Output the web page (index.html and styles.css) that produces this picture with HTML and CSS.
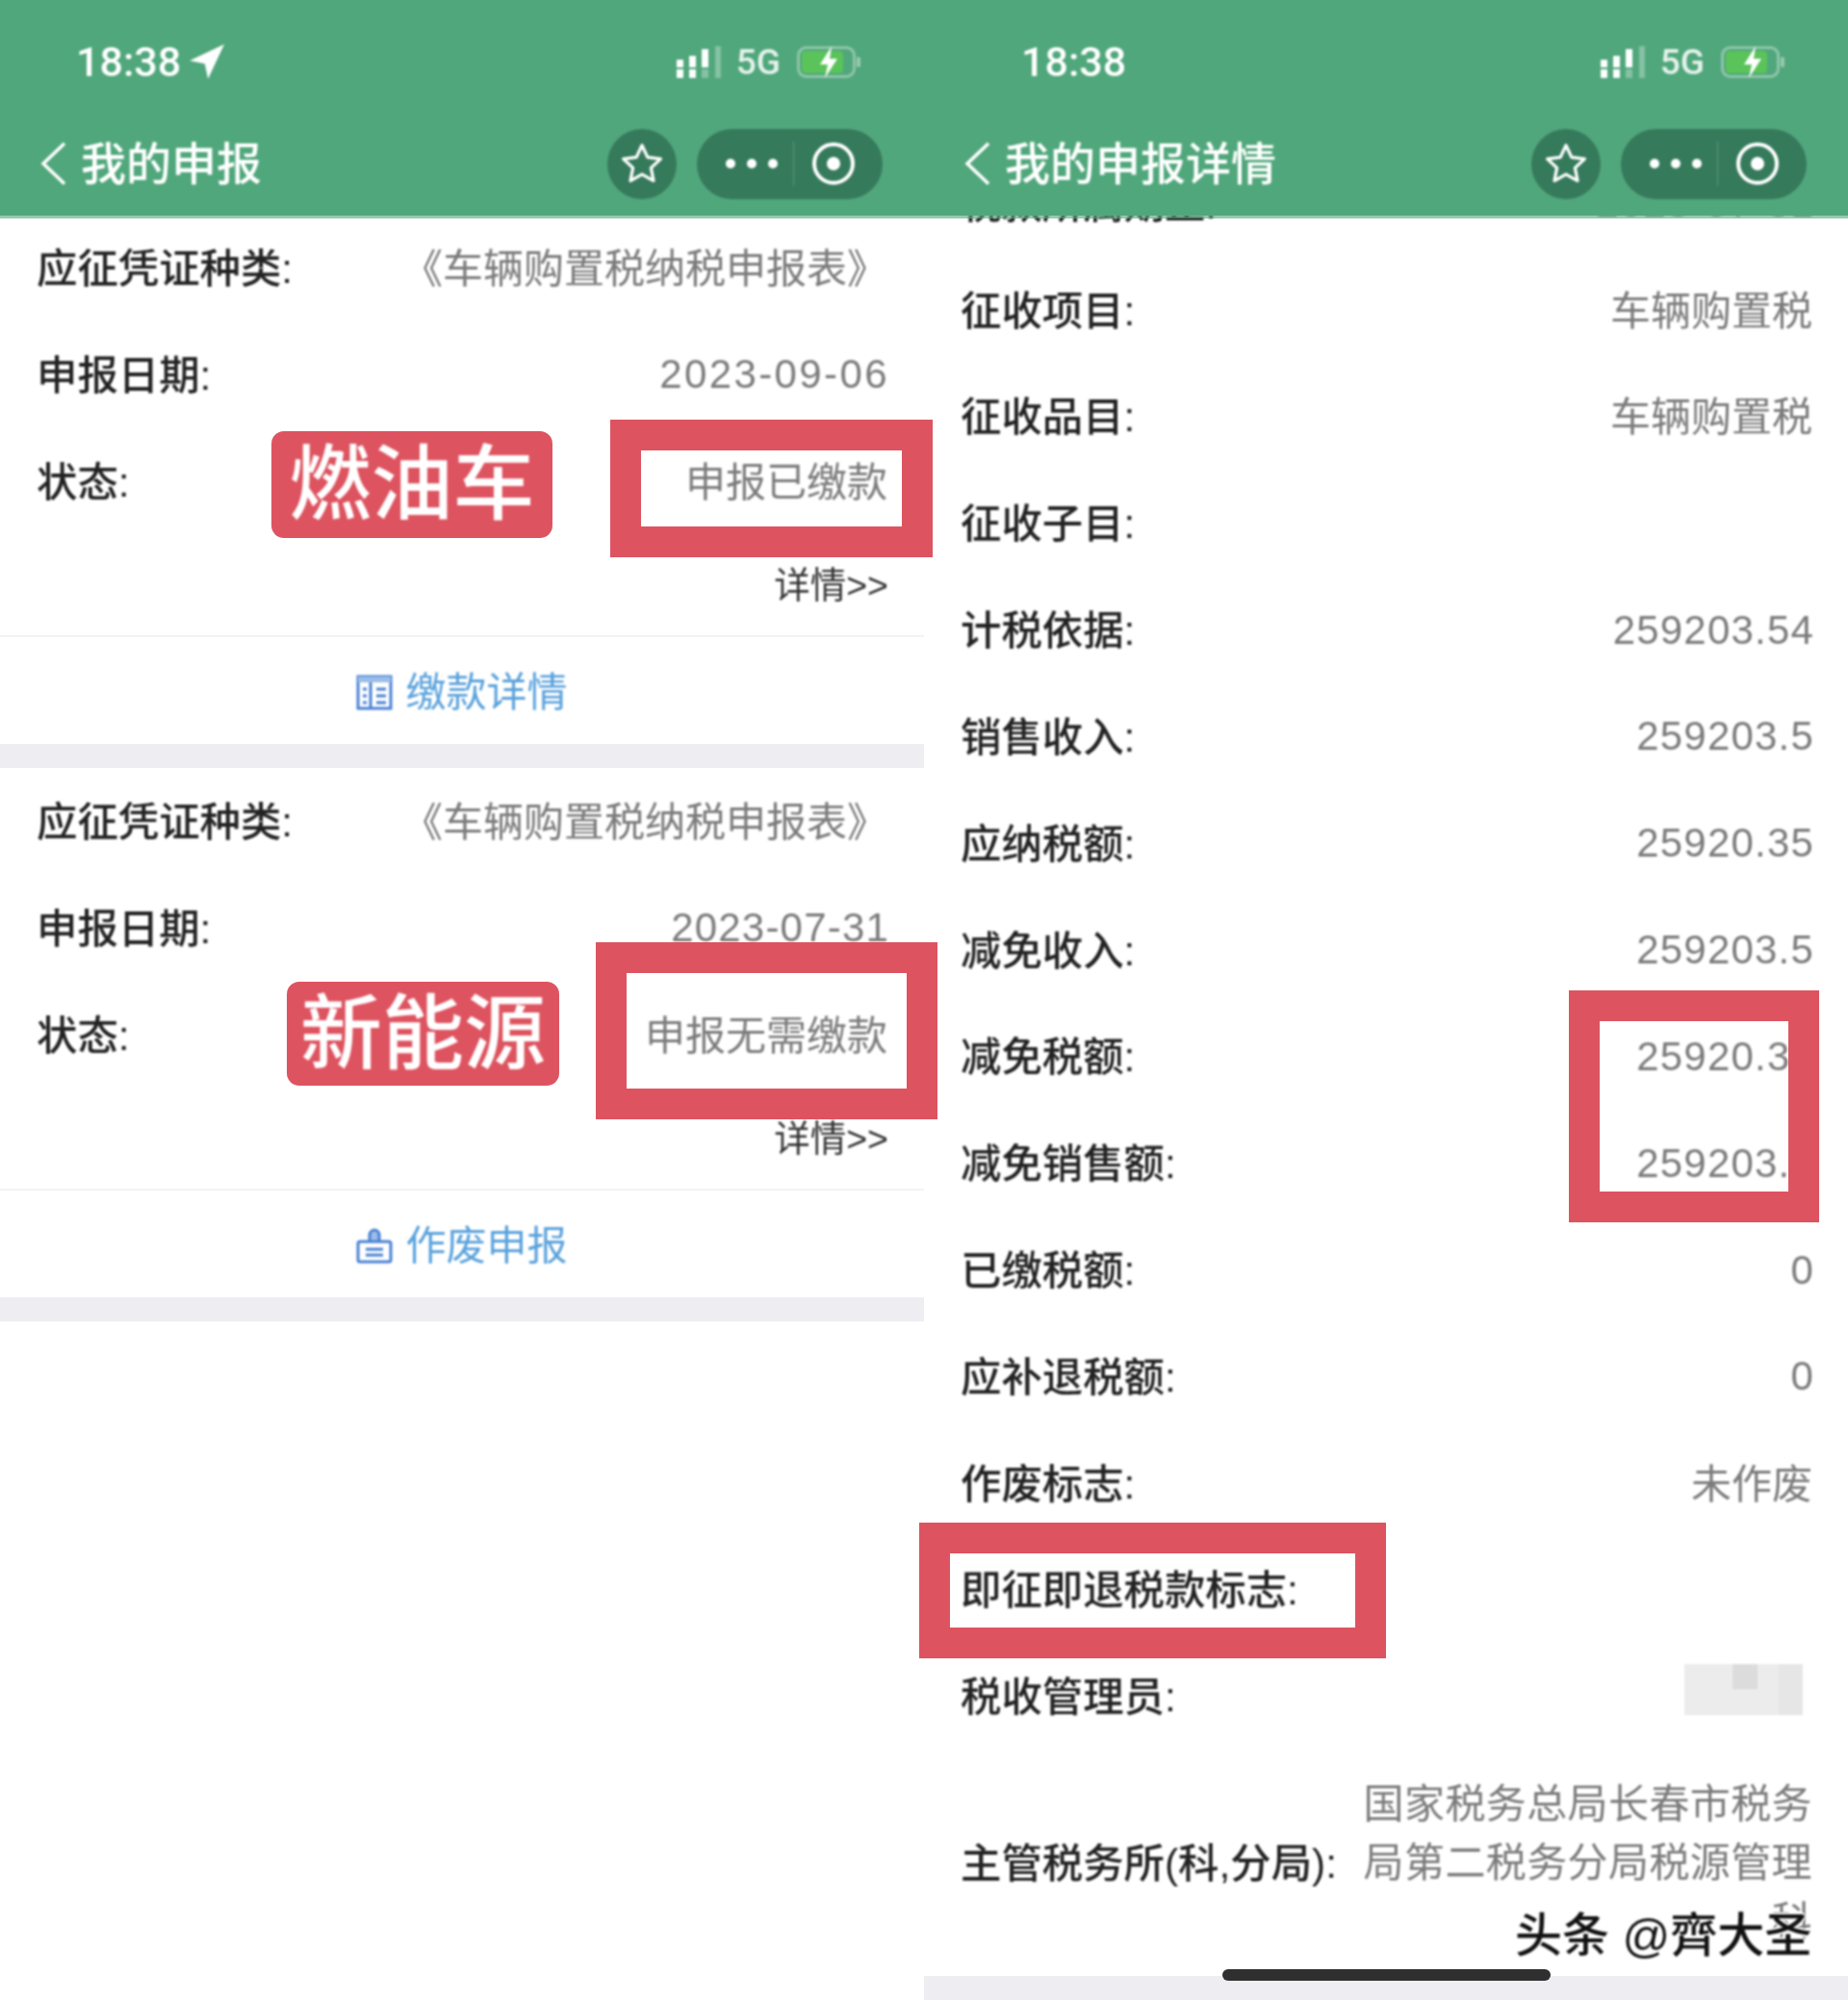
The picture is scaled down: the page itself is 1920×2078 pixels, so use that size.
FILE: index.html
```html
<!DOCTYPE html>
<html lang="zh-CN">
<head>
<meta charset="utf-8">
<title>我的申报</title>
<link rel="stylesheet" href="styles.css">
</head>
<body>
<div class="app">
  <section class="panel">
    <header class="topbar">
      <div class="status status-left">
        <span class="time">18:38</span>
        <svg class="loc" viewBox="0 0 32 32"><path d="M32 0 0 15l14 3 3 14z" fill="#fff"/></svg>
        <div class="status-right">
          <svg class="signal" viewBox="0 0 48 33"><g fill="#fff"><rect x="0" y="14" width="7" height="8"/><rect x="0" y="24" width="7" height="9"/><rect x="13" y="10" width="7" height="12"/><rect x="13" y="24" width="7" height="9"/><rect x="26" y="3" width="7" height="19"/></g><g fill="#fff" opacity=".3"><rect x="26" y="24" width="7" height="9"/><rect x="40" y="0" width="6" height="33"/></g></svg>
          <span class="net">5G</span>
          <svg class="battery" viewBox="0 0 67 33"><rect x="1.5" y="1.5" width="58" height="30" rx="8" fill="none" stroke="#fff" stroke-opacity=".35" stroke-width="3"/><rect x="5" y="5" width="43" height="23" rx="4" fill="#5ac35a"/><rect x="62" y="11" width="4" height="11" rx="2" fill="#fff" fill-opacity=".4"/><path d="M36 0 24 19h8l-3 14 13-20h-8z" fill="#fff"/></svg>
        </div>
      </div>
      <div class="nav">
        <svg class="back" viewBox="0 0 27 46"><path d="M25 2 3 23l22 21" fill="none" stroke="#fff" stroke-width="3.5"/></svg>
        <span class="title">我的申报</span>
        <div class="capsules">
          <div class="fav"><svg class="star" viewBox="0 0 44 44"><path d="m22 3 5.8 12.4 13.6 1.7-10 9.3 2.6 13.4L22 33.2 10 39.8l2.6-13.4-10-9.3 13.6-1.7z" fill="none" stroke="#fff" stroke-width="3.2" stroke-linejoin="round"/></svg></div>
          <div class="pill">
            <span class="dots"><i></i><i></i><i></i></span>
            <span class="pill-sep"></span>
            <span class="target"><i></i></span>
          </div>
        </div>
      </div>
    </header>
    <div class="edge"></div>
    <div class="feed">
      <article class="card">
        <div class="row"><span class="label">应征凭证种类:</span><span class="value">《车辆购置税纳税申报表》</span></div>
        <div class="row"><span class="label">申报日期:</span><span class="value num date">2023-09-06</span></div>
        <div class="row"><span class="label">状态:</span><span class="value">申报已缴款</span></div>
        <div class="more">详情&gt;&gt;</div>
        <div class="action">
          <svg class="act-icon" viewBox="0 0 38 38"><rect x="2" y="3" width="34" height="33" fill="none" stroke="#4a82d4" stroke-width="3"/><rect x="2" y="3" width="34" height="6" fill="#9cbde8"/><path d="M15 9v27M21 16h10M21 23h10M21 30h10M7 16h4M7 23h4M7 30h4" stroke="#4a82d4" stroke-width="3"/></svg>
          <span class="act-text">缴款详情</span>
        </div>
      </article>
      <div class="gap"></div>
      <article class="card">
        <div class="row"><span class="label">应征凭证种类:</span><span class="value">《车辆购置税纳税申报表》</span></div>
        <div class="row"><span class="label">申报日期:</span><span class="value num">2023-07-31</span></div>
        <div class="row"><span class="label">状态:</span><span class="value">申报无需缴款</span></div>
        <div class="more">详情&gt;&gt;</div>
        <div class="action">
          <svg class="act-icon" viewBox="0 0 38 38"><path d="M14 15V8a5 5 0 0 1 10 0v7" fill="#9cbde8" stroke="#4a82d4" stroke-width="3"/><rect x="2" y="15" width="34" height="21" rx="2" fill="none" stroke="#4a82d4" stroke-width="3"/><path d="M10 23h18M10 29h18" stroke="#4a82d4" stroke-width="3"/></svg>
          <span class="act-text">作废申报</span>
        </div>
      </article>
      <div class="gap"></div>
    </div>
    <div class="badge badge-fuel"><span>燃油车</span></div>
    <div class="badge badge-ev"><span>新能源</span></div>
    <div class="mark mark-a"></div>
    <div class="mark mark-b"></div>
  </section>

  <section class="panel">
    <header class="topbar">
      <div class="status status-plain">
        <span class="time">18:38</span>
        <div class="status-right">
          <svg class="signal" viewBox="0 0 48 33"><g fill="#fff"><rect x="0" y="14" width="7" height="8"/><rect x="0" y="24" width="7" height="9"/><rect x="13" y="10" width="7" height="12"/><rect x="13" y="24" width="7" height="9"/><rect x="26" y="3" width="7" height="19"/></g><g fill="#fff" opacity=".3"><rect x="26" y="24" width="7" height="9"/><rect x="40" y="0" width="6" height="33"/></g></svg>
          <span class="net">5G</span>
          <svg class="battery" viewBox="0 0 67 33"><rect x="1.5" y="1.5" width="58" height="30" rx="8" fill="none" stroke="#fff" stroke-opacity=".35" stroke-width="3"/><rect x="5" y="5" width="43" height="23" rx="4" fill="#5ac35a"/><rect x="62" y="11" width="4" height="11" rx="2" fill="#fff" fill-opacity=".4"/><path d="M36 0 24 19h8l-3 14 13-20h-8z" fill="#fff"/></svg>
        </div>
      </div>
      <div class="nav">
        <svg class="back" viewBox="0 0 27 46"><path d="M25 2 3 23l22 21" fill="none" stroke="#fff" stroke-width="3.5"/></svg>
        <span class="title">我的申报详情</span>
        <div class="capsules">
          <div class="fav"><svg class="star" viewBox="0 0 44 44"><path d="m22 3 5.8 12.4 13.6 1.7-10 9.3 2.6 13.4L22 33.2 10 39.8l2.6-13.4-10-9.3 13.6-1.7z" fill="none" stroke="#fff" stroke-width="3.2" stroke-linejoin="round"/></svg></div>
          <div class="pill">
            <span class="dots"><i></i><i></i><i></i></span>
            <span class="pill-sep"></span>
            <span class="target"><i></i></span>
          </div>
        </div>
      </div>
    </header>
    <div class="edge"></div>
    <div class="detail">
      <div class="line"><span class="label">税款所属期止:</span><span class="value num">2023-07-31</span></div>
      <div class="line"><span class="label">征收项目:</span><span class="value">车辆购置税</span></div>
      <div class="line"><span class="label">征收品目:</span><span class="value">车辆购置税</span></div>
      <div class="line"><span class="label">征收子目:</span></div>
      <div class="line"><span class="label">计税依据:</span><span class="value num">259203.54</span></div>
      <div class="line"><span class="label">销售收入:</span><span class="value num">259203.5</span></div>
      <div class="line"><span class="label">应纳税额:</span><span class="value num">25920.35</span></div>
      <div class="line"><span class="label">减免收入:</span><span class="value num">259203.5</span></div>
      <div class="line"><span class="label">减免税额:</span><span class="value num">25920.35</span></div>
      <div class="line"><span class="label">减免销售额:</span><span class="value num">259203.5</span></div>
      <div class="line"><span class="label">已缴税额:</span><span class="value num">0</span></div>
      <div class="line"><span class="label">应补退税额:</span><span class="value num">0</span></div>
      <div class="line"><span class="label">作废标志:</span><span class="value">未作废</span></div>
      <div class="line"><span class="label">即征即退税款标志:</span></div>
      <div class="line"><span class="label">税收管理员:</span><span class="redacted"></span></div>
      <div class="line line-tall"><span class="label">主管税务所(科,分局):</span><span class="value value-wrap">国家税务总局长春市税务局第二税务分局税源管理科</span></div>
    </div>
    <div class="foot"></div>
    <div class="mark mark-c"></div>
    <div class="mark mark-d"></div>
    <div class="watermark">头条 @齊大圣</div>
    <div class="homebar"></div>
  </section>
</div>
</body>
</html>
```
FILE: styles.css
```css
* { box-sizing: border-box; }
html, body { margin: 0; padding: 0; background: #fff; }
body {
  font-family: "Liberation Sans", "Noto Sans CJK SC", sans-serif;
  font-size: 42px;
  color: #222;
}
.app {
  display: flex;
  width: 1920px;
  height: 2078px;
  overflow: hidden;
}
.panel {
  position: relative;
  width: 960px;
  height: 2078px;
  background: #fff;
}
.topbar {
  position: relative;
  z-index: 1;
  height: 224px;
  background: #51a77c;
  color: #fff;
}
.edge {
  position: relative;
  z-index: 1;
  height: 3px;
  background: rgba(81, 167, 124, 0.6);
}
.status, .nav, .row, .line, .more, .act-text, .act-icon, .badge span, .watermark {
  filter: blur(0.9px);
}
.status {
  display: flex;
  align-items: center;
  height: 126px;
  padding: 2px 65px 0 79px;
}
.status-plain { padding-left: 101px; }
.time { font-family: Roboto, "Liberation Sans", sans-serif; font-size: 43px; font-weight: 500; line-height: 1; }
.loc { width: 36px; height: 36px; margin-left: 9px; }
.status-right {
  display: flex;
  align-items: center;
  gap: 14px;
  margin-left: auto;
}
.signal { width: 48px; height: 33px; }
.net { margin-right: 3px; font-family: Roboto, "Liberation Sans", sans-serif; font-size: 37px; font-weight: 500; line-height: 1; opacity: .85; }
.battery { width: 67px; height: 33px; }
.nav {
  display: flex;
  align-items: center;
  height: 88px;
  padding: 0 43px 0 42px;
}
.back { width: 27px; height: 46px; flex: none; }
.title { margin-left: 15px; font-size: 47px; font-weight: 500; line-height: 1; }
.capsules { display: flex; gap: 21px; margin-left: auto; }
.fav {
  display: flex;
  align-items: center;
  justify-content: center;
  width: 72px;
  height: 73px;
  border-radius: 50%;
  background: #367a5c;
}
.star { width: 44px; height: 44px; }
.pill {
  display: flex;
  align-items: center;
  width: 193px;
  height: 73px;
  border-radius: 37px;
  background: #367a5c;
  padding-left: 30px;
}
.dots { display: flex; gap: 12px; width: 70px; }
.dots i { width: 10px; height: 10px; border-radius: 50%; background: #fff; }
.pill-sep { width: 1px; height: 46px; background: rgba(255, 255, 255, .2); }
.target {
  display: flex;
  align-items: center;
  justify-content: center;
  width: 44px;
  height: 44px;
  margin-left: 19px;
  border: 4px solid #fff;
  border-radius: 50%;
}
.target i { width: 14px; height: 14px; border-radius: 50%; background: #fff; }

.feed { margin-top: -4.5px; }
.row, .line {
  display: flex;
  align-items: center;
  justify-content: space-between;
  white-space: nowrap;
}
.row { height: 111px; padding: 0 38px; }
.label { padding-bottom: 6px; color: #222; font-size: 42.4px; font-weight: 500; }
.value { padding-bottom: 6px; color: #7b7b7b; }
.num { padding-bottom: 0; margin-right: -2px; letter-spacing: 1.2px; }
.date { letter-spacing: 2.4px; }
.more {
  display: flex;
  align-items: center;
  justify-content: flex-end;
  height: 104px;
  padding: 0 37px 6px 0;
  font-size: 37.5px;
  color: #333;
}
.action {
  display: flex;
  align-items: center;
  justify-content: center;
  gap: 13px;
  height: 113px;
  padding-top: 2px;
  border-top: 2px solid #f3f3f3;
  color: #5aa2dc;
}
.act-text { padding-bottom: 6px; }
.act-icon { width: 38px; height: 38px; margin-top: 2px; }
.gap { height: 25px; background: #eeeef2; }

.detail { margin-top: -71.2px; }
.line { height: 110.83px; padding: 0 37px 0 38px; }
.line-tall { height: 186px; margin-top: 24px; }
.value-wrap {
  width: 470px;
  padding-bottom: 0;
  line-height: 61px;
  text-align: right;
  white-space: normal;
  letter-spacing: .4px;
}
.redacted {
  width: 123px;
  height: 53px;
  margin: 0 10px 14px auto;
  background:
    linear-gradient(#dcdcdc, #dcdcdc) 50px 0 / 26px 26px no-repeat,
    linear-gradient(#e6e6e6, #e6e6e6) 98px 0 / 25px 53px no-repeat,
    #ececec;
}
.foot { height: 25px; margin-top: 25px; background: #eeeef2; }

.badge {
  position: absolute;
  z-index: 2;
  display: flex;
  align-items: center;
  justify-content: center;
  border-radius: 13px;
  background: #dd5460;
  color: #fff;
  font-size: 85px;
  font-weight: 500;
  line-height: 1;
}
.badge-fuel { left: 282px; top: 448px; width: 292px; height: 111px; }
.badge-ev { left: 298px; top: 1020px; width: 283px; height: 108px; }
.mark {
  position: absolute;
  z-index: 2;
  border: 32px solid #dd5460;
}
.mark-a { left: 634px; top: 436px; width: 335px; height: 143px; }
.mark-b { left: 619px; top: 979px; width: 355px; height: 184px; }
.mark-c { left: 670px; top: 1029px; width: 260px; height: 241px; }
.mark-d { left: -5px; top: 1582px; width: 485px; height: 141px; }
.watermark {
  position: absolute;
  z-index: 3;
  left: 614px;
  top: 1981px;
  font-size: 49px;
  font-weight: 500;
  line-height: 60px;
  white-space: nowrap;
  color: #111;
  text-shadow: 2px 0 #fff, -2px 0 #fff, 0 2px #fff, 0 -2px #fff;
}
.homebar {
  position: absolute;
  z-index: 3;
  left: 310px;
  top: 2046px;
  width: 341px;
  height: 12px;
  border-radius: 6px;
  background: #2f2f2f;
}
```
